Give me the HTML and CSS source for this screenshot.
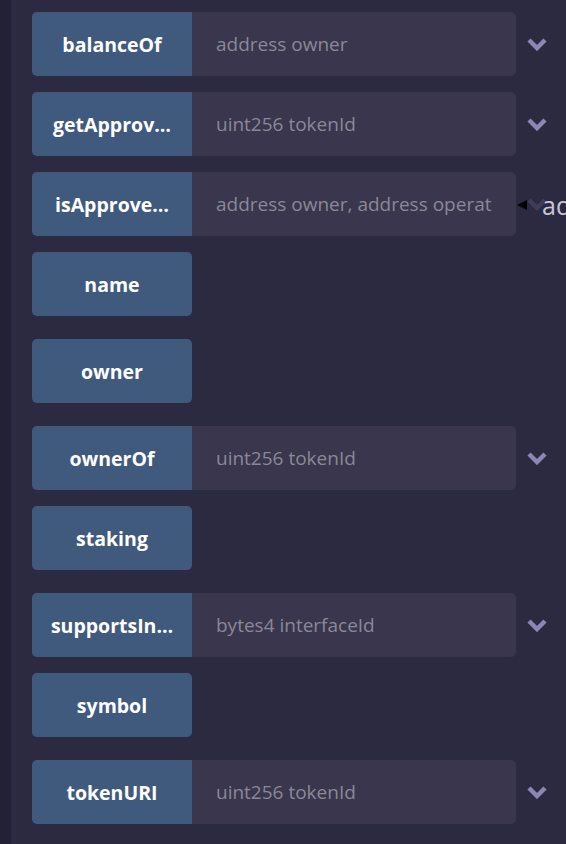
FILE: index.html
```html
<!DOCTYPE html>
<html>
<head>
<meta charset="utf-8">
<link rel="stylesheet" href="styles.css">
</head>
<body>
<div class="page">
  <div class="strip"></div>
  <div class="list">
    <div class="row">
      <button class="fn split">balanceOf</button>
      <input class="args" placeholder="address owner">
      <span class="chev"><svg width="22" height="14" viewBox="0 0 22 14"><polyline points="3,3 11,11 19,3" /></svg></span>
    </div>
    <div class="row">
      <button class="fn split">getApprov…</button>
      <input class="args" placeholder="uint256 tokenId">
      <span class="chev"><svg width="22" height="14" viewBox="0 0 22 14"><polyline points="3,3 11,11 19,3" /></svg></span>
    </div>
    <div class="row">
      <button class="fn split">isApprove…</button>
      <input class="args" placeholder="address owner, address operator">
      <span class="chev dim"><svg width="22" height="14" viewBox="0 0 22 14"><polyline points="3,3 11,11 19,3" /></svg></span>
      <div class="tip"><span class="tip-arrow"></span><span class="tip-text">address owner, address operator</span></div>
    </div>
    <div class="row solo">
      <button class="fn">name</button>
    </div>
    <div class="row solo">
      <button class="fn">owner</button>
    </div>
    <div class="row">
      <button class="fn split">ownerOf</button>
      <input class="args" placeholder="uint256 tokenId">
      <span class="chev"><svg width="22" height="14" viewBox="0 0 22 14"><polyline points="3,3 11,11 19,3" /></svg></span>
    </div>
    <div class="row solo">
      <button class="fn">staking</button>
    </div>
    <div class="row">
      <button class="fn split">supportsIn…</button>
      <input class="args" placeholder="bytes4 interfaceId">
      <span class="chev"><svg width="22" height="14" viewBox="0 0 22 14"><polyline points="3,3 11,11 19,3" /></svg></span>
    </div>
    <div class="row solo">
      <button class="fn">symbol</button>
    </div>
    <div class="row">
      <button class="fn split">tokenURI</button>
      <input class="args" placeholder="uint256 tokenId">
      <span class="chev"><svg width="22" height="14" viewBox="0 0 22 14"><polyline points="3,3 11,11 19,3" /></svg></span>
    </div>
  </div>
</div>
</body>
</html>
```
FILE: styles.css
```css
html, body {
  margin: 0;
  padding: 0;
  background: #2c2a40;
  height: 100%;
  overflow: hidden;
}
.page {
  display: flex;
  min-height: 844px;
  font-family: "Open Sans", "Noto Sans", sans-serif;
}
.strip {
  width: 11px;
  flex: none;
  background: #232135;
}
.list {
  display: flex;
  flex-direction: column;
  padding: 12px 0 0 21px;
  flex: 1;
}
.row {
  position: relative;
  display: flex;
  align-items: center;
  height: 64px;
  margin-bottom: 16px;
}
.row.solo {
  margin-bottom: 23px;
}
.fn {
  width: 160px;
  height: 64px;
  flex: none;
  border: none;
  margin: 0;
  background: #405a7e;
  color: #ffffff;
  font-family: inherit;
  font-weight: 700;
  font-size: 19.5px;
  border-radius: 5px;
  padding: 0 12px;
  white-space: nowrap;
  overflow: hidden;
  text-overflow: clip;
  text-align: center;
}
.fn.split {
  border-radius: 5px 0 0 5px;
}
.args {
  width: 324px;
  height: 64px;
  box-sizing: border-box;
  flex: none;
  border: none;
  margin: 0;
  background: #3a364d;
  border-radius: 0 5px 5px 0;
  padding: 0 24px;
  font-family: inherit;
  font-size: 19px;
  color: #d0cde0;
  outline: none;
}
.args::placeholder {
  color: #8a8898;
}
.chev {
  width: 42px;
  display: flex;
  justify-content: center;
  align-items: center;
  margin-left: 0;
}
.chev svg polyline {
  fill: none;
  stroke: #8b87b4;
  stroke-width: 4.5;
  stroke-linejoin: miter;
}
.chev.dim svg polyline {
  stroke: #3f3b58;
}
.tip {
  position: absolute;
  left: 485px;
  top: 18px;
  display: flex;
  align-items: center;
  white-space: nowrap;
}
.tip-arrow {
  width: 0;
  height: 0;
  border-top: 5px solid transparent;
  border-bottom: 5px solid transparent;
  border-right: 10px solid #000000;
}
.tip-text {
  margin-left: 15px;
  color: #c9c6dc;
  font-size: 25px;
  line-height: 30px;
}
```
